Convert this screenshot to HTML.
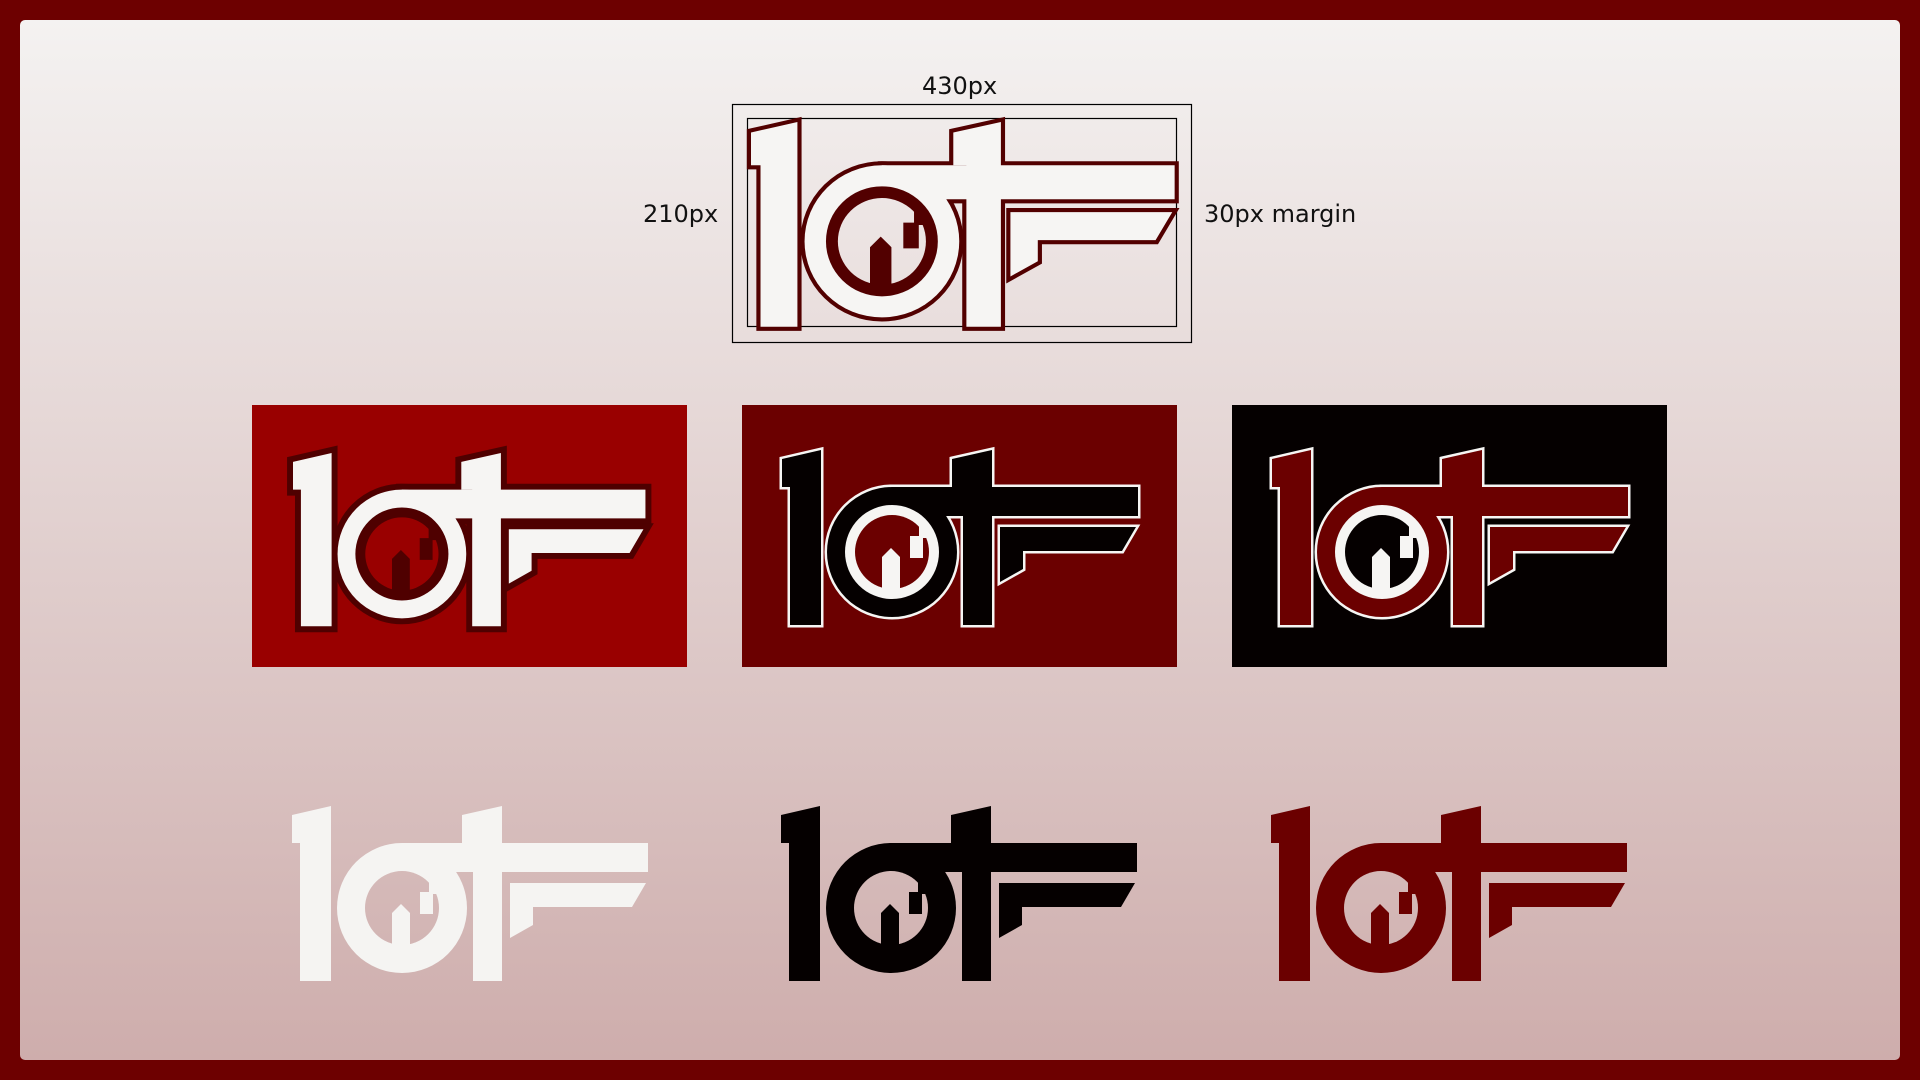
<!DOCTYPE html>
<html><head><meta charset="utf-8"><style>
html,body{margin:0;padding:0;width:1920px;height:1080px;overflow:hidden;background:#6d0000;}
.panel{position:absolute;left:20px;top:20px;width:1880px;height:1040px;border-radius:5px;background:linear-gradient(#f4f2f1,#ceadac);}
.t{position:absolute;font-family:"DejaVu Sans","Liberation Sans",sans-serif;font-size:24px;color:#111;line-height:1;}
svg{position:absolute;left:0;top:0;}
</style></head><body>
<div class="panel"></div>
<div class="t" style="left:922px;top:74px;">430px</div>
<div class="t" style="left:643px;top:202px;">210px</div>
<div class="t" style="left:1204px;top:202px;">30px margin</div>
<svg width="1920" height="1080" viewBox="0 0 1920 1080">
<defs>
<path id="L1" d="M0,9 L39,0 L39,175 L8,175 L8,37 L0,37 Z"/>
<path id="R1" d="M170,9 L210,0 L210,175 L181,175 L181,37 L170,37 Z"/>
<path id="BR" d="M110,37 H356 V66 H110 Z"/>
<path id="AR" d="M218,132 L218,77 L354,77 L340,101 L241,101 L241,119 Z"/>
<circle id="RG" cx="110" cy="102" r="65"/>
<path id="HN" d="M100,145 L100,107 L109,98 L118,107 L118,145 Z M137,70 L145,74 L150,88 L141,88 L141,108 L128,108 L128,86 L137,86 Z"/>
<mask id="hm" maskUnits="userSpaceOnUse" x="-40" y="-40" width="460" height="270">
<rect x="-40" y="-40" width="460" height="270" fill="#fff"/>
<circle cx="110" cy="102" r="37" fill="#000"/>
<use href="#HN" fill="#fff"/>
</mask>
<g id="shapes"><use href="#L1"/><use href="#R1"/><use href="#RG"/><use href="#BR"/><use href="#AR"/></g>
</defs>

<rect x="732.5" y="104.5" width="459" height="238" fill="none" stroke="#000" stroke-width="1.2"/>
<rect x="747.5" y="118.5" width="429" height="208" fill="none" stroke="#000" stroke-width="1.2"/>

<g transform="translate(751,122) scale(1.19,1.17)"><g mask="url(#hm)">
<use href="#shapes" fill="#520000" stroke="#520000" stroke-width="7" stroke-linejoin="miter"/>
<use href="#shapes" fill="#f6f5f3"/>
<circle cx="110" cy="102" r="47" fill="#520000"/>
<use href="#HN" fill="#520000"/>
</g></g>

<rect x="252" y="405" width="435" height="262" fill="#990000"/>
<rect x="742" y="405" width="435" height="262" fill="#6b0000"/>
<rect x="1232" y="405" width="435" height="262" fill="#050000"/>

<g transform="translate(293,453) scale(0.99)"><g mask="url(#hm)">
<use href="#shapes" fill="#4f0000" stroke="#4f0000" stroke-width="12" stroke-linejoin="miter"/>
<use href="#shapes" fill="#f6f5f3"/>
<circle cx="110" cy="102" r="47" fill="#4f0000"/>
<use href="#HN" fill="#4f0000"/>
</g></g>

<g transform="translate(782,450)"><g mask="url(#hm)">
<use href="#shapes" fill="#f6f5f3" stroke="#f6f5f3" stroke-width="5" stroke-linejoin="miter"/>
<use href="#shapes" fill="#050000"/>
<circle cx="110" cy="102" r="47" fill="#f6f5f3"/>
<use href="#HN" fill="#f6f5f3"/>
</g></g>

<g transform="translate(1272,450)"><g mask="url(#hm)">
<use href="#shapes" fill="#f6f5f3" stroke="#f6f5f3" stroke-width="5" stroke-linejoin="miter"/>
<use href="#shapes" fill="#6b0000"/>
<circle cx="110" cy="102" r="47" fill="#f6f5f3"/>
<use href="#HN" fill="#f6f5f3"/>
</g></g>

<g transform="translate(292,806)"><g mask="url(#hm)"><use href="#shapes" fill="#f5f4f2"/></g></g>
<g transform="translate(781,806)"><g mask="url(#hm)"><use href="#shapes" fill="#050000"/></g></g>
<g transform="translate(1271,806)"><g mask="url(#hm)"><use href="#shapes" fill="#6b0000"/></g></g>
</svg>
</body></html>
